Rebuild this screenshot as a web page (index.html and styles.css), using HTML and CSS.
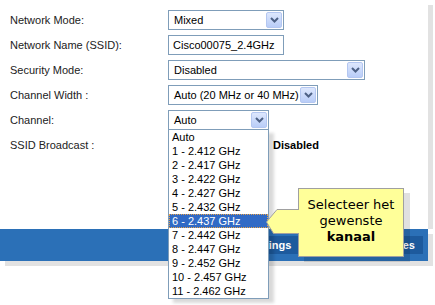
FILE: index.html
```html
<!DOCTYPE html>
<html lang="en">
<head>
    <meta charset="UTF-8">
    <title>Wireless Settings</title>
    <link rel="stylesheet" href="styles.css">
</head>
<body>
    <div class="page">
        <div class="top">
            <div class="settings">
                <div class="row">
                    <span class="label">Network Mode:</span>
                    <div class="combo w-mode"><span class="value">Mixed</span><span class="arrow"><svg width="9" height="6" viewBox="0 0 9 6"><path d="M1 1 L4.5 4.5 L8 1" fill="none" stroke="#4d6185" stroke-width="2"/></svg></span></div>
                </div>
                <div class="row">
                    <span class="label">Network Name (SSID):</span>
                    <input class="text-input" type="text" value="Cisco00075_2.4GHz">
                </div>
                <div class="row">
                    <span class="label">Security Mode:</span>
                    <div class="combo w-security"><span class="value">Disabled</span><span class="arrow"><svg width="9" height="6" viewBox="0 0 9 6"><path d="M1 1 L4.5 4.5 L8 1" fill="none" stroke="#4d6185" stroke-width="2"/></svg></span></div>
                </div>
                <div class="row">
                    <span class="label">Channel Width :</span>
                    <div class="combo w-width"><span class="value">Auto (20 MHz or 40 MHz)</span><span class="arrow"><svg width="9" height="6" viewBox="0 0 9 6"><path d="M1 1 L4.5 4.5 L8 1" fill="none" stroke="#4d6185" stroke-width="2"/></svg></span></div>
                </div>
                <div class="row">
                    <span class="label">Channel:</span>
                    <div class="combo w-channel">
                        <span class="value">Auto</span><span class="arrow"><svg width="9" height="6" viewBox="0 0 9 6"><path d="M1 1 L4.5 4.5 L8 1" fill="none" stroke="#4d6185" stroke-width="2"/></svg></span>
                        <ul class="dropdown">
                            <li>Auto</li>
                            <li>1 - 2.412 GHz</li>
                            <li>2 - 2.417 GHz</li>
                            <li>3 - 2.422 GHz</li>
                            <li>4 - 2.427 GHz</li>
                            <li>5 - 2.432 GHz</li>
                            <li class="selected">6 - 2.437 GHz</li>
                            <li>7 - 2.442 GHz</li>
                            <li>8 - 2.447 GHz</li>
                            <li>9 - 2.452 GHz</li>
                            <li>10 - 2.457 GHz</li>
                            <li>11 - 2.462 GHz</li>
                        </ul>
                    </div>
                </div>
                <div class="row">
                    <span class="label">SSID Broadcast :</span>
                    <span class="radios"><b>Disabled</b></span>
                </div>
            </div>
            <div class="edge"></div>
        </div>
        <div class="actions">
            <button type="button" class="btn">Save Settings</button>
            <button type="button" class="btn">Cancel Changes</button>
        </div>

        <!-- tooltip pointing at the highlighted channel -->
        <div class="callout">
            <svg class="pointer" width="36" height="28" viewBox="0 0 36 28">
                <polygon points="35,0.5 12,0.5 1.5,13 8.5,24.5 35,24.5" fill="#ffff99"/>
                <polyline points="34,0.5 12,0.5 1.5,13 8.5,24.5 34,24.5" fill="none" stroke="#a0a0a0" stroke-width="1"/>
            </svg>
            <p>Selecteer het<br>gewenste<br><b>kanaal</b></p>
        </div>
    </div>
</body>
</html>
```

FILE: styles.css
```css
* {
    box-sizing: border-box;
}

body {
    margin: 0;
    font-family: 'Liberation Sans', Arial, sans-serif;
    font-size: 11px;
    color: #222;
    background: #fff;
    width: 435px;
    height: 305px;
    overflow: hidden;
}

.page {
    position: relative;
}

.top {
    display: flex;
}

.settings {
    width: 428px;
    height: 229px;
    padding-top: 7px;
}

.edge {
    width: 5px;
    margin-top: 5px;
    background: #e2e2e2;
}

.row {
    display: flex;
    align-items: center;
    height: 25px;
}

.label {
    width: 168px;
    padding-left: 10px;
}

.combo {
    position: relative;
    display: flex;
    align-items: center;
    justify-content: space-between;
    height: 20px;
    border: 1px solid #7f9db9;
    background: #fff;
    color: #000;
    padding-left: 5px;
}

.w-mode { width: 116px; }
.w-security { width: 197px; }
.w-width { width: 150px; }
.w-channel { width: 101px; }

.arrow {
    display: flex;
    align-items: center;
    justify-content: center;
    width: 16px;
    height: 16px;
    margin-right: 1px;
    border: 1px solid #b4c7f1;
    border-radius: 2px;
    background: linear-gradient(#dde7fd, #b9cdf8);
}

.text-input {
    width: 116px;
    height: 20px;
    border: 1px solid #7f9db9;
    padding: 0 4px;
    font-family: 'Liberation Sans', Arial, sans-serif;
    font-size: 11px;
    color: #000;
    margin: 0;
}

.dropdown {
    position: absolute;
    top: 18px;
    left: -1px;
    width: 101px;
    margin: 0;
    padding: 0;
    list-style: none;
    background: #fff;
    border: 1px solid #7f9db9;
    box-shadow: 5px 4px 3px rgba(0, 0, 0, 0.15);
    z-index: 2;
}

.dropdown li {
    height: 14px;
    line-height: 14px;
    padding-left: 3px;
    color: #000;
}

.dropdown li.selected {
    background: #316ac5;
    color: #fff;
    outline: 1px dotted #e8a34a;
    outline-offset: -1px;
}

.radios {
    padding-left: 105px;
    color: #000;
}

.actions {
    display: flex;
    align-items: center;
    justify-content: flex-end;
    gap: 22px;
    width: 428px;
    height: 32px;
    padding-right: 5px;
    background: #2b70b7;
    box-shadow: 5px 5px 0 #e2e2e2;
}

.btn {
    height: 18px;
    padding: 0 8px;
    border: none;
    background: #1d5a9d;
    color: #fff;
    font-family: 'Liberation Sans', Arial, sans-serif;
    font-size: 11px;
    font-weight: bold;
}

.callout {
    position: absolute;
    left: 298px;
    top: 188px;
    width: 106px;
    height: 69px;
    background: #ffff99;
    border: 1px solid #a0a0a0;
    box-shadow: 6px 5px 0 rgba(0, 0, 0, 0.12);
    z-index: 3;
}

.callout .pointer {
    position: absolute;
    left: -34px;
    top: 20px;
}

.callout p {
    margin: 8px 0 0;
    text-align: center;
    font-family: 'DejaVu Sans', Verdana, sans-serif;
    font-size: 13px;
    line-height: 16px;
    color: #000;
}
```
